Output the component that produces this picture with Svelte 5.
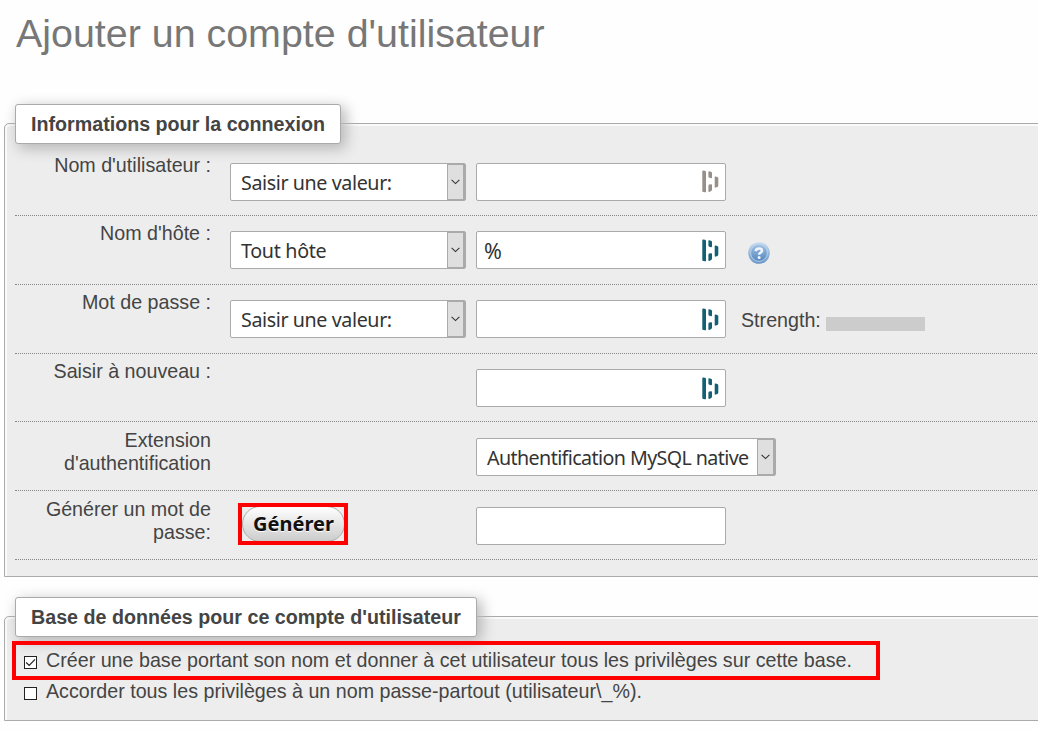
<script>
  const rows = [
    { label: "Nom d'utilisateur :", select: 'Saisir une valeur:', fit: 'a', icon: '#989088' },
    { label: "Nom d'hôte :", select: 'Tout hôte', fit: 'b', value: '%', icon: '#126074', help: true },
    { label: 'Mot de passe :', select: 'Saisir une valeur:', fit: 'a', icon: '#126074', strength: true },
    { label: 'Saisir à nouveau :', icon: '#126074' },
    { label: "Extension d'authentification", wide: true },
    { label: 'Générer un mot de passe:', button: true }
  ];
</script>

{#snippet select(text, cls)}
  <div class="select {cls}">
    <span class="value"><span>{text}</span></span>
    <span class="arrow">
      <svg width="9" height="6" viewBox="0 0 9 6"><path d="M0.6 0.8 4.5 4.6 8.4 0.8" fill="none" stroke="#333" stroke-width="1.1" /></svg>
    </span>
  </div>
{/snippet}

<main>
  <h1><span>Ajouter un compte d'utilisateur</span></h1>

  <section class="login">
    <h2 class="l1"><span>Informations pour la connexion</span></h2>
    <div class="rows">
      {#each rows as r}
        <div class="row">
          <div class="label">{r.label}</div>
          <div class="choice">
            {#if r.select}{@render select(r.select, r.fit)}{/if}
            {#if r.button}
              <button><span>Générer</span></button>
              <i class="frame small"></i>
            {/if}
          </div>
          {#if r.wide}
            {@render select('Authentification MySQL native', 'w')}
          {:else}
            <div class="input">
              <span>{r.value ?? ''}</span>
              {#if r.icon}
                <svg width="17" height="23" viewBox="0 0 17 23" fill={r.icon}>
                  <path d="M0.3 1.2Q0.3 0.3 1.2 0.4L3 0.8Q4 1 4 1.9V21.4Q4 22.4 3 22.3L1.3 22Q0.3 21.8 0.3 20.9Z" />
                  <path d="M6.4 2Q6.4 1 7.2 1.2L9 1.7Q10 2 10 3V7.2Q10 8.4 9 8.2L7.3 7.7Q6.4 7.4 6.4 6.4Z" />
                  <path d="M6.4 15.9Q6.4 14.9 7.2 14.6L9 14.2Q10 14 10 15.1V19.6Q10 20.6 9.1 21.1L7.4 21.9Q6.4 22.3 6.4 21.1Z" />
                  <path d="M12.7 7.3Q12.7 6.2 13.6 6.5L15.3 7Q16.3 7.3 16.3 8.3V15.6Q16.3 16.5 15.5 16.9L13.7 17.6Q12.7 18 12.7 16.8Z" />
                </svg>
              {/if}
            </div>
          {/if}
          {#if r.help}
            <svg class="help" width="24" height="24" viewBox="0 0 24 24">
              <defs>
                <linearGradient id="ball" x2="0" y2="1"><stop offset="0" stop-color="#9fc0e2" /><stop offset="1" stop-color="#5587c0" /></linearGradient>
                <linearGradient id="rim" x2="0" y2="1"><stop offset="0" stop-color="#c9ddf1" /><stop offset="1" stop-color="#6693c7" /></linearGradient>
              </defs>
              <circle cx="12" cy="12" r="10.8" fill="url(#rim)" />
              <circle cx="12" cy="12" r="8.4" fill="url(#ball)" stroke="#bdd3ea" stroke-width="0.9" />
              <path d="M8.7 10.2Q8.9 7.5 12 7.5Q15 7.5 15 9.7Q15 11 13.3 11.8Q12.1 12.3 12.1 13.8" fill="none" stroke="#f0f5fb" stroke-width="2.5" />
              <circle cx="12.1" cy="16.5" r="1.5" fill="#f0f5fb" />
            </svg>
          {/if}
          {#if r.strength}
            <div class="strength">Strength:<i></i></div>
          {/if}
        </div>
      {/each}
    </div>
  </section>

  <section class="database">
    <h2 class="l2"><span>Base de données pour ce compte d'utilisateur</span></h2>
    <div class="check first">
      <span class="box"><svg width="11" height="11" viewBox="0 0 11 11"><path d="M1.2 5.5 4.2 8.5 10 2.4" fill="none" stroke="#222" stroke-width="1.2" /></svg></span>
      <span>Créer une base portant son nom et donner à cet utilisateur tous les privilèges sur cette base.</span>
      <i class="frame large"></i>
    </div>
    <div class="check">
      <span class="box"></span>
      <span>Accorder tous les privilèges à un nom passe-partout (utilisateur\_%).</span>
    </div>
  </section>
</main>

<style>
  :global(body) { margin: 0; background: #fefefe; overflow: hidden; }
  main {
    width: 1038px; height: 730px; overflow: hidden; box-sizing: border-box;
    font: 19.68px/23px "Liberation Sans", Arial, sans-serif; color: #444;
  }
  h1 { margin: 0; height: 123px; padding: 9px 0 0 16px; box-sizing: border-box; font-size: 39.4px; line-height: 48px; font-weight: 400; color: #777; white-space: nowrap; }
  section {
    box-sizing: border-box; margin-left: 4px; width: 1060px; background: #ededed;
    border: 1px solid #aaa; border-radius: 5px 0 0 0; box-shadow: 2px 2px 0 #fafafa inset;
  }
  .login { height: 454px; }
  .database { height: 105px; margin-top: 39px; }
  h2 {
    box-sizing: border-box; height: 40px; margin: -20px 0 0 10px; background: #fff;
    border: 1px solid #aaa; border-radius: 3px; box-shadow: 4px 4px 14px 1px #b8b8b8;
    font-size: 19.68px; line-height: 38px; padding-left: 15px; white-space: nowrap;
  }
  .l1 { width: 326px; }
  .l2 { width: 462px; }
  .rows { padding: 3px 0 0 10px; }
  .row {
    height: 68.85px; box-sizing: border-box; border-bottom: 1px dotted #888;
    display: flex; align-items: flex-start;
  }
  .label { width: 181px; flex: none; padding: 6.6px 0 0 15px; text-align: right; }
  .choice { width: 246px; margin-left: 19px; position: relative; flex: none; }
  .select, .input {
    height: 38px; box-sizing: border-box; background: #fff; border: 1px solid #aaa;
    border-radius: 2px; margin-top: 15.5px; display: flex; align-items: center; flex: none;
    font-family: "Noto Sans", sans-serif; color: #333; white-space: nowrap;
  }
  .select { width: 236px; padding-left: 10px; }
  .value { flex: 1; padding-top: 1px; }
  .a { letter-spacing: -0.4px; }
  .b { letter-spacing: -0.3px; }
  .w { width: 300px; letter-spacing: -0.6px; }
  .arrow {
    width: 18px; height: 36px; flex: none; box-sizing: border-box; border: 1px solid #aaa; border-right-width: 2px;
    background: #dfdfdf; display: flex; align-items: center; justify-content: center;
  }
  .input { width: 250px; padding: 0 6px 0 7px; justify-content: space-between; font-size: 21.5px; }
  .help { margin: 25px 0 0 21px; }
  .strength { margin: 24px 0 0 15px; display: flex; align-items: center; }
  .strength i { width: 99px; height: 14px; background: #ccc; margin: 8px 0 0 5px; }
  button {
    display: block; margin: 15px 0 0 12px; width: 103px; height: 36px; padding: 0; border: 1px solid #aaa;
    border-radius: 18px; background: linear-gradient(#fff, #ccc);
    font: bold 20px/34px "Noto Sans", sans-serif; color: #111; text-shadow: 0 1px 0 #fff; white-space: nowrap;
  }
  .frame { position: absolute; border: 4px solid #f00; box-sizing: border-box; }
  .small { left: 8px; top: 11.5px; width: 110px; height: 42px; }
  .check { display: flex; align-items: center; height: 31px; padding-left: 19px; position: relative; white-space: nowrap; }
  .first { margin-top: 8px; }
  .box { width: 13px; height: 13px; box-sizing: border-box; border: 1px solid #222; background: #fff; margin: 4px 9px 0 0; display: flex; }
  .large { left: 7px; top: -4px; width: 868px; height: 39px; }
</style>
